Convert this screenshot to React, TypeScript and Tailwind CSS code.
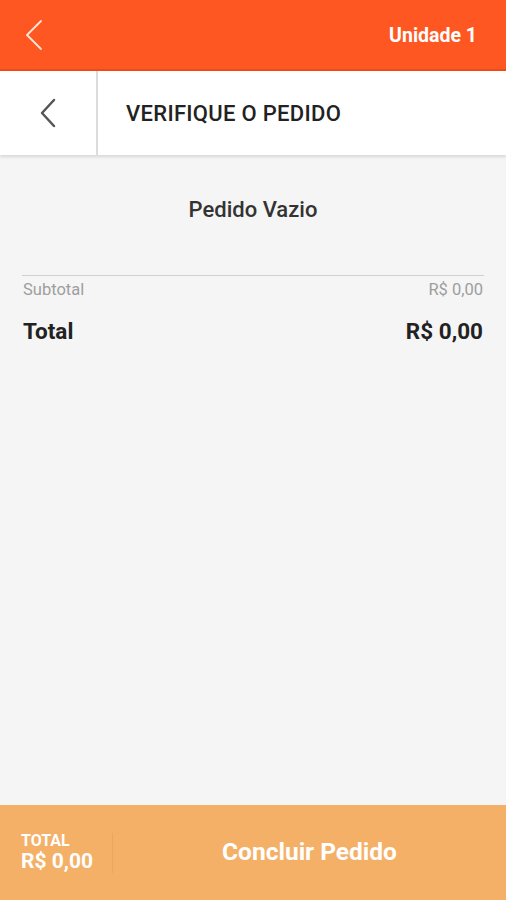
import React from "react";

export default function App() {
  return (
    <div className="w-[506px] h-[900px] flex flex-col bg-[#f5f5f5] overflow-hidden" style={{ fontFamily: "Roboto, 'Liberation Sans', sans-serif" }}>
      <div className="h-[71px] shrink-0 bg-[#ff5722] border-b-2 border-[#f04a16] flex items-center justify-between pl-[24px] pr-[29px]">
        <svg width="20" height="32" viewBox="0 0 20 32" fill="none">
          <path d="M17 2 L3 16 L17 30" stroke="#ffe6d8" strokeWidth="1.8" strokeLinecap="round" strokeLinejoin="round" />
        </svg>
        <span className="text-white font-bold text-[19.5px] mt-[3px]">Unidade 1</span>
      </div>
      <div className="h-[84px] shrink-0 bg-white flex shadow-[0_2px_3px_rgba(0,0,0,0.12)] relative z-10">
        <div className="w-[98px] border-r-2 border-[#dcdcdc] flex items-center justify-center">
          <svg width="20" height="32" viewBox="0 0 20 32" fill="none">
            <path d="M16 3 L4 16 L16 29" stroke="#555" strokeWidth="2.5" strokeLinecap="round" strokeLinejoin="round" />
          </svg>
        </div>
        <div className="flex items-center pl-[28px] text-[22px] tracking-[0.3px] font-medium text-[#222]">VERIFIQUE O PEDIDO</div>
      </div>
      <div className="flex-1 flex flex-col px-[22px]">
        <div className="text-center text-[22px] leading-[26px] font-medium text-[#333] mt-[42px]">Pedido Vazio</div>
        <div className="mt-[52px] border-t-[1.5px] border-[#d0d0d0]" />
        <div className="flex justify-between text-[16.5px] leading-[20px] text-[#9e9e9e] mt-[4px] pl-[1px] pr-[1px]">
          <span>Subtotal</span>
          <span>R$ 0,00</span>
        </div>
        <div className="flex justify-between text-[22.5px] leading-[26px] font-bold text-[#222] mt-[18px] pl-[1px] pr-[1px]">
          <span>Total</span>
          <span>R$ 0,00</span>
        </div>
      </div>
      <div className="h-[95px] shrink-0 bg-[#f5b067] flex items-center">
        <div className="w-[113px] h-[40px] flex flex-col justify-center pl-[21px] border-r border-[#eaa55e] text-white font-bold leading-none">
          <span className="text-[16px]">TOTAL</span>
          <span className="text-[21px] mt-[2px]">R$ 0,00</span>
        </div>
        <div className="flex-1 text-center text-white font-bold text-[24.5px]">Concluir Pedido</div>
      </div>
    </div>
  );
}
